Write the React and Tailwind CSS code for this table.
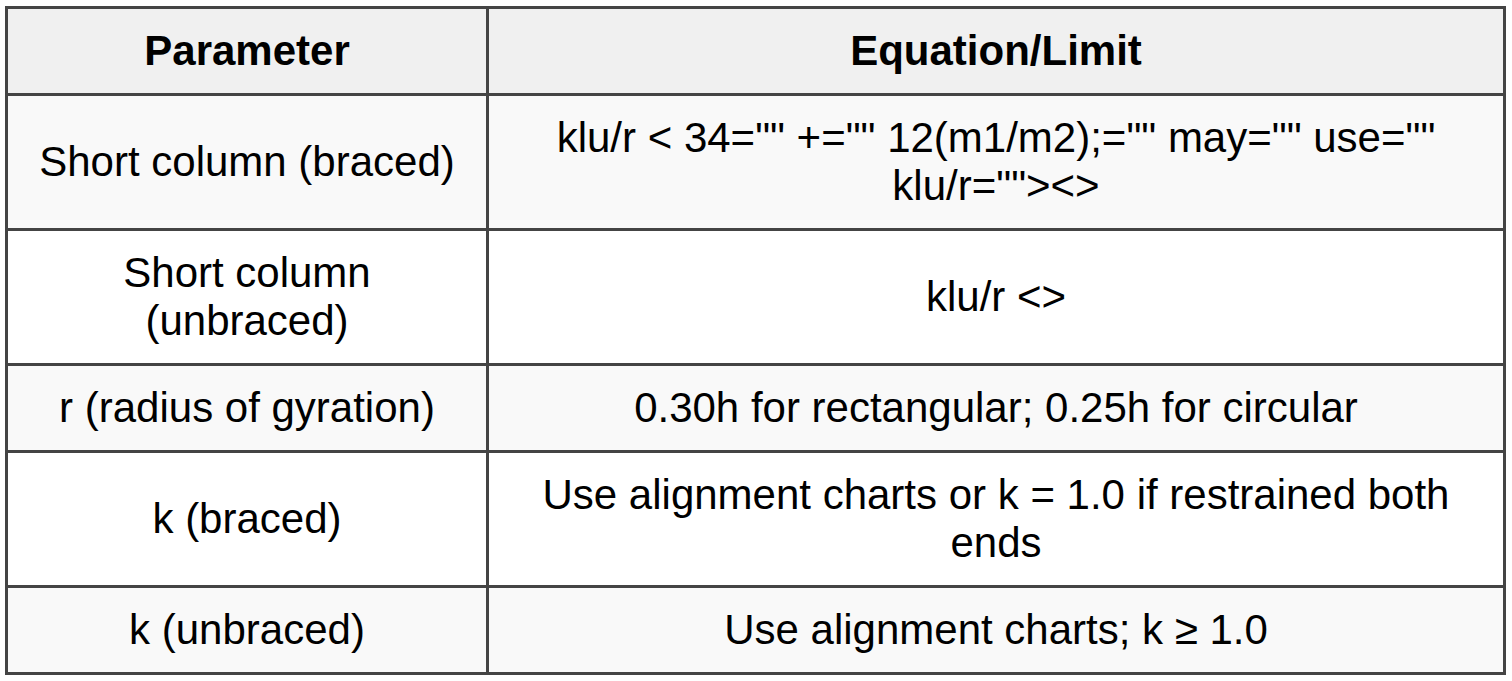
import React from 'react';

const rows = [
  { param: 'Short column (braced)', eq: 'klu/r < 34="" +="" 12(m1/m2);="" may="" use="" klu/r=""><>' },
  { param: 'Short column (unbraced)', eq: 'klu/r <>' },
  { param: 'r (radius of gyration)', eq: '0.30h for rectangular; 0.25h for circular' },
  { param: 'k (braced)', eq: 'Use alignment charts or k = 1.0 if restrained both ends' },
  { param: 'k (unbraced)', eq: 'Use alignment charts; k ≥ 1.0' },
];

function App() {
  return (
    <div className="min-h-screen bg-white pl-[5px] pt-[6px] font-['Liberation_Sans',Arial,sans-serif] text-black">
      <div className="w-[1501px] border-[3px] border-[#444444]">
        <div className="grid grid-cols-[481px_1014px] bg-[#f0f0f0] border-b-[3px] border-[#444444]">
          <div className="border-r-[3px] border-[#444444] px-[18px] py-[18px] text-center text-[42px] leading-[48px] font-bold">
            Parameter
          </div>
          <div className="px-[18px] py-[18px] text-center text-[42px] leading-[48px] font-bold">
            Equation/Limit
          </div>
        </div>
        {rows.map((row, i) => (
          <div
            key={i}
            className={`grid grid-cols-[481px_1014px] ${i % 2 === 0 ? 'bg-[#f9f9f9]' : 'bg-white'} ${i < rows.length - 1 ? 'border-b-[3px] border-[#444444]' : ''}`}
          >
            <div className="flex items-center justify-center border-r-[3px] border-[#444444] px-[18px] py-[18px] text-center text-[42px] leading-[48px]">
              {row.param}
            </div>
            <div className="flex items-center justify-center px-[18px] py-[18px] text-center text-[42px] leading-[48px]">
              {row.eq}
            </div>
          </div>
        ))}
      </div>
    </div>
  );
}

export default App;
